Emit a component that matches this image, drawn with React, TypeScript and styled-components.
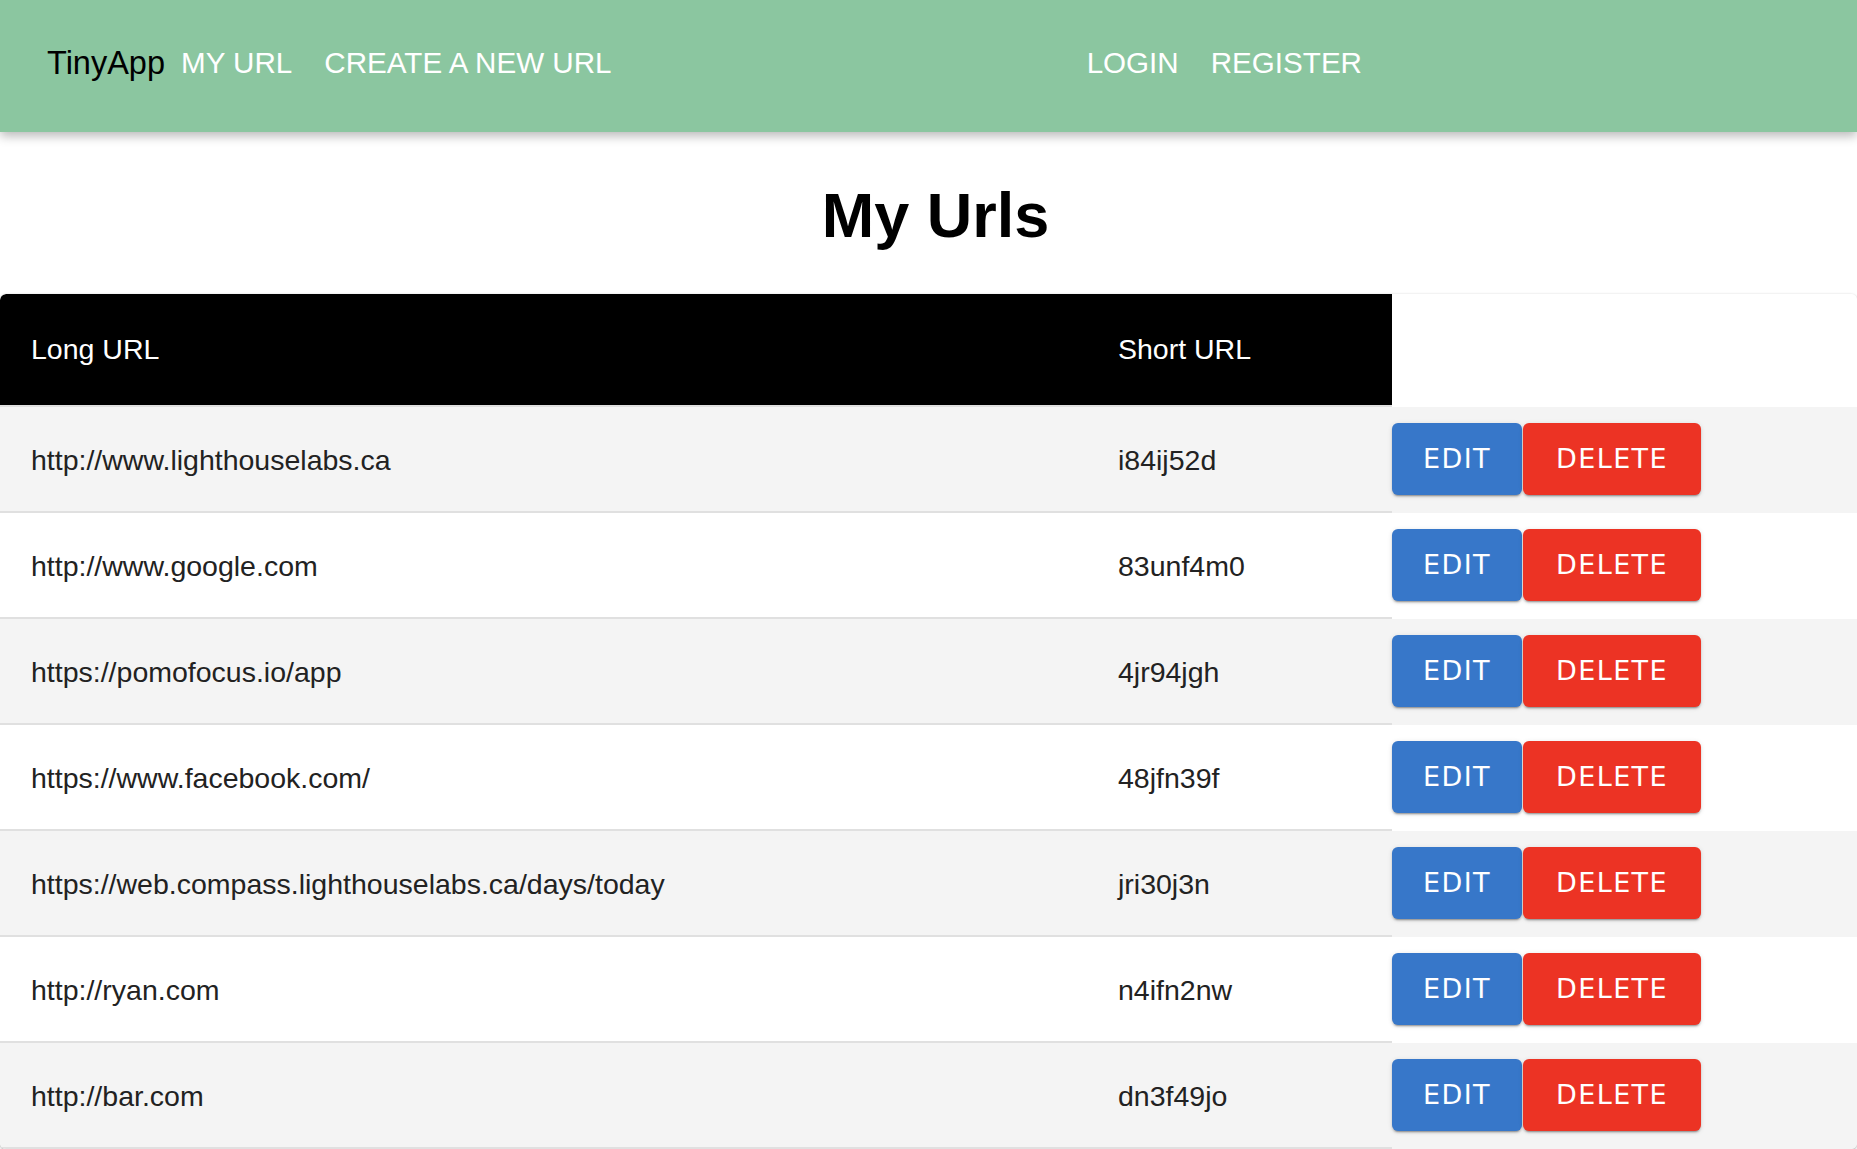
import React from "react";
import styled, { createGlobalStyle } from "styled-components";

const URLS = [
  { long: "http://www.lighthouselabs.ca", short: "i84ij52d" },
  { long: "http://www.google.com", short: "83unf4m0" },
  { long: "https://pomofocus.io/app", short: "4jr94jgh" },
  { long: "https://www.facebook.com/", short: "48jfn39f" },
  { long: "https://web.compass.lighthouselabs.ca/days/today", short: "jri30j3n" },
  { long: "http://ryan.com", short: "n4ifn2nw" },
  { long: "http://bar.com", short: "dn3f49jo" },
];

export default function App() {
  return (
    <>
      <GlobalStyle />
      <Navbar>
        <NavInner>
          <Brand>TinyApp</Brand>
          <NavLink>MY URL</NavLink>
          <NavLink>CREATE A NEW URL</NavLink>
          <RightGroup>
            <NavLink>LOGIN</NavLink>
            <NavLink>REGISTER</NavLink>
          </RightGroup>
        </NavInner>
      </Navbar>

      <Title>My Urls</Title>

      <UrlTable>
        <colgroup>
          <col style={{ width: 1087 }} />
          <col style={{ width: 305 }} />
          <col />
        </colgroup>
        <thead>
          <tr>
            <HeadCell>Long URL</HeadCell>
            <HeadCell>Short URL</HeadCell>
            <EmptyHead />
          </tr>
        </thead>
        <tbody>
          {URLS.map((url, index) => (
            <Row key={url.short} $striped={index % 2 === 0}>
              <Cell>{url.long}</Cell>
              <Cell>{url.short}</Cell>
              <ActionCell>
                <Actions>
                  <ActionButton $color="#3777c9">EDIT</ActionButton>
                  <ActionButton $color="#ec3324" $wide>
                    DELETE
                  </ActionButton>
                </Actions>
              </ActionCell>
            </Row>
          ))}
        </tbody>
      </UrlTable>
    </>
  );
}

const GlobalStyle = createGlobalStyle`
  body {
    margin: 0;
    background: #ffffff;
    font-family: "Liberation Sans", Arial, sans-serif;
    overflow: hidden;
  }
`;

const Navbar = styled.nav`
  height: 132px;
  background-color: #8bc6a0;
  box-shadow: 0 4px 10px rgba(0, 0, 0, 0.28);
  position: relative;
  z-index: 1;
`;

const NavInner = styled.div`
  max-width: 1378px;
  height: 100%;
  padding-left: 47px;
  box-sizing: border-box;
  display: flex;
  align-items: center;
  padding-bottom: 6px;
`;

const Brand = styled.span`
  font-size: 32.5px;
  color: #000000;
`;

const NavLink = styled.a`
  padding: 0 16px;
  font-size: 29.6px;
  color: #ffffff;
  cursor: pointer;
`;

const RightGroup = styled.div`
  margin-left: auto;
  display: flex;
`;

const Title = styled.h1`
  margin: 0;
  height: 162px;
  display: flex;
  align-items: center;
  justify-content: center;
  padding-left: 14px;
  padding-top: 4px;
  box-sizing: border-box;
  font-size: 63px;
  font-weight: 700;
  color: #000000;
`;

const UrlTable = styled.table`
  width: 100%;
  table-layout: fixed;
  border-collapse: separate;
  border-spacing: 0;
  border-radius: 6px;
  overflow: hidden;
  box-shadow: 0 1px 3px rgba(0, 0, 0, 0.35);
`;

const HeadCell = styled.th`
  height: 111px;
  padding: 0 31px;
  background-color: #000000;
  color: #ffffff;
  font-size: 28.5px;
  font-weight: 400;
  text-align: left;
  border-bottom: 2px solid #e0e0e0;

  &:first-child {
    border-top-left-radius: 6px;
  }
`;

const EmptyHead = styled.th`
  background-color: #ffffff;
`;

const Row = styled.tr<{ $striped: boolean }>`
  background-color: ${(p) => (p.$striped ? "#f4f4f4" : "#ffffff")};
`;

const Cell = styled.td`
  height: 101px;
  padding: 3px 31px 0;
  font-size: 28.5px;
  color: #222222;
  border-bottom: 2px solid #e0e0e0;
  white-space: nowrap;
`;

const ActionCell = styled.td`
  padding: 0;
  vertical-align: middle;
`;

const Actions = styled.div`
  display: flex;
  gap: 1px;
  margin-top: -3px;
`;

const ActionButton = styled.button<{ $color: string; $wide?: boolean }>`
  width: ${(p) => (p.$wide ? "178px" : "130px")};
  height: 72px;
  border: none;
  border-radius: 6px;
  background-color: ${(p) => p.$color};
  color: #ffffff;
  font-family: "DejaVu Sans", sans-serif;
  font-size: 27px;
  letter-spacing: 1.4px;
  cursor: pointer;
  box-shadow: 0 3px 1px -2px rgba(0, 0, 0, 0.2), 0 2px 2px 0 rgba(0, 0, 0, 0.14),
    0 1px 5px 0 rgba(0, 0, 0, 0.12);
`;
